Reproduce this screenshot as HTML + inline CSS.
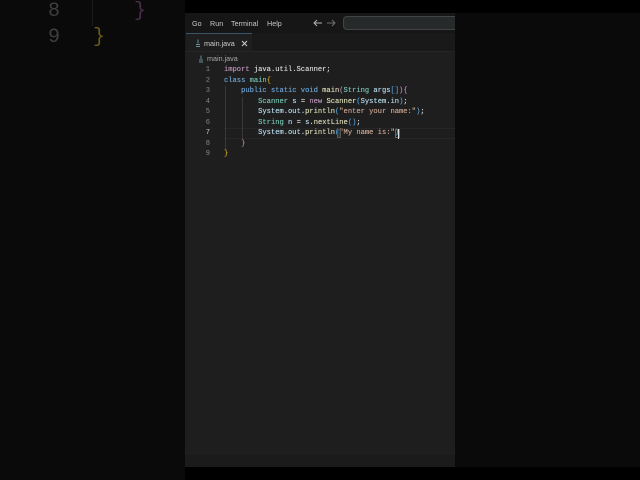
<!DOCTYPE html>
<html><head><meta charset="utf-8">
<style>
html,body{margin:0;padding:0;width:640px;height:480px;overflow:hidden;background:#0a0a0a}
.a{position:absolute}
.t{position:absolute;white-space:pre;font-family:"Liberation Sans",sans-serif;color:#c8c8c8;filter:blur(.2px)}
.c{position:absolute;left:224px;white-space:pre;font-family:"Liberation Mono",monospace;font-size:7.12px;line-height:10px;color:#d4d4d4;filter:blur(.25px);text-shadow:0 0 .4px currentColor}
.n{position:absolute;width:24px;text-align:right;left:186px;white-space:pre;font-family:"Liberation Mono",monospace;font-size:7.12px;line-height:10px;color:#858585;filter:blur(.2px)}
.k{color:#6a9fcc}.p{color:#b58fb2}.y{color:#d6d6b4}.v{color:#b2d4e6}.s{color:#c2a08e}.g{color:#72bfae}.b{color:#c9a82a}.m{color:#b77cb8}.l{color:#4f9cd4}
.big{position:absolute;font-family:"Liberation Mono",monospace;font-size:20px;line-height:26px;white-space:pre}
</style></head><body>
<div class="a" style="left:0;top:0;width:640px;height:13px;background:#000"></div>
<div class="a" style="left:0;top:467px;width:640px;height:13px;background:#000"></div>
<div class="a" style="left:0;top:0;width:185px;height:480px;background:#0a0a0a"></div>
<div class="big" style="left:48px;top:-1px;color:#3f3f3f">8</div>
<div class="big" style="left:48px;top:25px;color:#3f3f3f">9</div>
<div class="big" style="left:134px;top:-1px;color:#4a2f4a">}</div>
<div class="big" style="left:93px;top:25px;color:#6a5a1c">}</div>
<div class="a" style="left:92px;top:0;width:1px;height:26px;background:#1d1d1d"></div>

<div class="a" style="left:185px;top:13px;width:270px;height:454px;background:#1e1e1e"></div>
<div class="a" style="left:185px;top:13px;width:270px;height:20px;background:#161616"></div>
<div class="a" style="left:185px;top:33px;width:270px;height:18px;background:#191919"></div>
<div class="a" style="left:185px;top:51px;width:270px;height:1px;background:#252525"></div>
<div class="a" style="left:186px;top:33px;width:66px;height:18px;background:#1e1e1e;border-top:1px solid #3b5568;box-sizing:border-box"></div>
<div class="a" style="left:185px;top:455px;width:270px;height:12px;background:#1b1b1b"></div>

<div class="t" style="left:192px;top:19px;font-size:7.2px;line-height:10px">Go</div>
<div class="t" style="left:210px;top:19px;font-size:7.2px;line-height:10px">Run</div>
<div class="t" style="left:231px;top:19px;font-size:7.2px;line-height:10px">Terminal</div>
<div class="t" style="left:267px;top:19px;font-size:7.2px;line-height:10px">Help</div>
<svg class="a" style="left:312px;top:18px" width="26" height="10" fill="none" stroke-width="1">
<path d="M2 5H10M5 2L2 5L5 8" stroke="#b0b0b0"/>
<path d="M15 5H23M20 2L23 5L20 8" stroke="#6e6e6e"/>
</svg>
<div class="a" style="left:343px;top:16px;width:120px;height:14px;background:#262a2a;border:1px solid #444;border-radius:4px;box-sizing:border-box"></div>
<div class="a" style="left:455px;top:13px;width:20px;height:20px;background:#0a0a0a"></div>

<svg class="a" style="left:194px;top:39px" width="8" height="9" fill="none" stroke="#6f8a9a" stroke-width="1"><path d="M4 0.5V4.5M2 5.5H6M2 7.5H6"/></svg>
<div class="t" style="left:204px;top:39px;font-size:7.2px;line-height:10px;color:#d0d0d0">main.java</div>
<svg class="a" style="left:241px;top:40px" width="7" height="7" fill="none" stroke="#d0d0d0" stroke-width="1"><path d="M1 1L6 6M6 1L1 6"/></svg>

<svg class="a" style="left:197px;top:55px" width="8" height="8" fill="none" stroke="#6f8a9a" stroke-width="1"><path d="M4 0.5V4M2 5H6M2 7H6"/></svg>
<div class="t" style="left:207px;top:54px;font-size:7.2px;line-height:10px;color:#a8a8a8">main.java</div>

<div class="a" style="left:224px;top:128px;width:231px;height:11px;border-top:1px solid #262626;border-bottom:1px solid #262626;box-sizing:border-box"></div>
<div class="a" style="left:225px;top:86px;width:1px;height:64px;background:#383838"></div>
<div class="a" style="left:242px;top:97px;width:1px;height:42px;background:#383838"></div>

<div class="n" style="top:65px">1</div>
<div class="n" style="top:76px">2</div>
<div class="n" style="top:86px">3</div>
<div class="n" style="top:97px">4</div>
<div class="n" style="top:107px">5</div>
<div class="n" style="top:118px">6</div>
<div class="n" style="top:128px;color:#c6c6c6">7</div>
<div class="n" style="top:139px">8</div>
<div class="n" style="top:149px">9</div>

<div class="c" style="top:65px"><span class="p">import</span> java.util.Scanner;</div>
<div class="c" style="top:76px"><span class="k">class</span> <span class="g">main</span><span class="b">{</span></div>
<div class="c" style="top:86px">    <span class="k">public static void</span> <span class="y">main</span><span class="m">(</span><span class="g">String</span> <span class="v">args</span><span class="l">[]</span><span class="m">)</span><span class="m">{</span></div>
<div class="c" style="top:97px">        <span class="g">Scanner</span> <span class="v">s</span> = <span class="p">new</span> <span class="y">Scanner</span><span class="l">(</span><span class="v">System</span>.<span class="v">in</span><span class="l">)</span>;</div>
<div class="c" style="top:107px">        <span class="v">System</span>.<span class="v">out</span>.<span class="y">println</span><span class="l">(</span><span class="s">"enter your name:"</span><span class="l">)</span>;</div>
<div class="c" style="top:118px">        <span class="g">String</span> <span class="v">n</span> = <span class="v">s</span>.<span class="y">nextLine</span><span class="l">()</span>;</div>
<div class="c" style="top:128px">        <span class="v">System</span>.<span class="v">out</span>.<span class="y">println</span><span class="l">(</span><span class="s">"My name is:"</span><span class="l">)</span></div>
<div class="c" style="top:139px">    <span class="m">}</span></div>
<div class="c" style="top:149px"><span class="b">}</span></div>
<div class="a" style="left:337px;top:129px;width:4px;height:9px;background:#2a3a44;border:1px solid #555;box-sizing:border-box"></div>
<div class="a" style="left:395px;top:129px;width:5px;height:9px;border:1px solid #666;box-sizing:border-box"></div>
<div class="a" style="left:398px;top:129px;width:1px;height:10px;background:#e0e0e0"></div>
</body></html>
